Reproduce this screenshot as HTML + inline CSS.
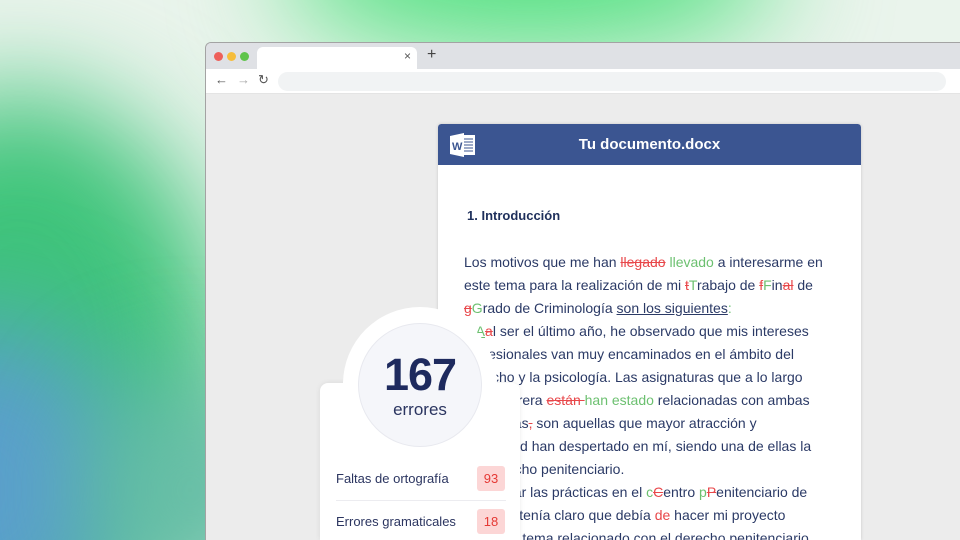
<!DOCTYPE html>
<html><head><meta charset="utf-8"><style>
*{margin:0;padding:0;box-sizing:border-box}
html,body{width:960px;height:540px;overflow:hidden}
body{position:relative;font-family:"Liberation Sans",sans-serif;background:#eaf4ec}
.bg{position:absolute;left:0;top:0;width:960px;height:540px;overflow:hidden}
.b{position:absolute;border-radius:50%;filter:blur(55px)}
.win{position:absolute;left:205px;top:42px;width:755px;height:498px;background:#ececec;border:1px solid #a3a3a3;border-bottom:none;border-right:none;border-radius:6px 0 0 0;overflow:hidden}
.tabs{height:26px;background:#dfe1e5;position:relative}
.dot{position:absolute;top:9px;width:9px;height:9px;border-radius:50%}
.tab{position:absolute;left:51px;top:4px;width:160px;height:22px;background:#fff;border-radius:6px 6px 0 0}
.tool{height:25px;background:#fff;position:relative;border-bottom:1px solid #e4e4e4}
.addr{position:absolute;left:72px;top:3px;width:668px;height:19px;background:#f1f3f4;border-radius:10px}
.doc{position:absolute;left:438px;top:124px;width:423px;height:416px;background:#fff;border-radius:3px 3px 0 0;box-shadow:0 0 3px rgba(0,0,0,.15);overflow:hidden}
.hd{height:41px;background:#3b5591;border-radius:3px 3px 0 0;color:#fff;font-weight:bold;font-size:15px;text-align:center;line-height:41px;position:relative}
.h1{position:absolute;left:29px;top:84px;font-weight:bold;font-size:13px;color:#1e2f5b}
.txt{position:absolute;left:26px;top:127px;width:395px;font-size:14px;line-height:23px;color:#2b3a66;white-space:nowrap}
.r{color:#e8474a;text-decoration:line-through}
.g{color:#6cc070}
.card{position:absolute;left:320px;top:383px;width:200px;height:157px;background:#fff;border-radius:8px 8px 0 0;box-shadow:0 0 6px rgba(0,0,0,.08)}
.bump{position:absolute;left:343px;top:307px;width:154px;height:154px;border-radius:50%;background:#fff}
.inner{position:absolute;left:358px;top:323px;width:124px;height:124px;border-radius:50%;background:#f5f6fa;border:1px solid #e8e9ef;text-align:center;color:#1e2a5e}
.row{position:absolute;left:336px;font-size:13px;color:#2b3560}
.badge{position:absolute;left:477px;width:28px;height:25px;background:#fcd6d6;color:#e53935;border-radius:3px;font-size:13px;text-align:center;line-height:25px}
</style></head><body>
<div class="bg">
<div class="b" style="left:280px;top:-110px;width:500px;height:160px;background:#4fe07e"></div>
<div class="b" style="left:-190px;top:90px;width:420px;height:560px;background:#3ec47a"></div>
<div class="b" style="left:-180px;top:320px;width:320px;height:340px;background:#5a9fcc"></div>
<div class="b" style="left:90px;top:380px;width:200px;height:220px;background:#66bda6"></div>
</div>
<div class="win">
<div class="tabs">
<div class="dot" style="left:8px;background:#ee5f5a"></div>
<div class="dot" style="left:21px;background:#f6bd3c"></div>
<div class="dot" style="left:34px;background:#5fc44b"></div>
<div class="tab"><span style="position:absolute;right:6px;top:2px;font-size:12px;color:#555">×</span></div>
<span style="position:absolute;left:221px;top:3px;font-size:16px;color:#444">+</span>
</div>
<div class="tool">
<span style="position:absolute;left:9px;top:3px;font-size:13px;color:#555">←</span>
<span style="position:absolute;left:31px;top:3px;font-size:13px;color:#aaa">→</span>
<span style="position:absolute;left:52px;top:3px;font-size:13px;color:#555">↻</span>
<div class="addr"></div>
</div>
</div>
<div class="doc">
<div class="hd">Tu documento.docx
<svg style="position:absolute;left:11px;top:8px" width="28" height="26" viewBox="0 0 28 26"><rect x="9" y="3" width="17" height="20" fill="#fff"/><g stroke="#3b5591" stroke-width="1"><line x1="15" y1="7" x2="24" y2="7"/><line x1="15" y1="10" x2="24" y2="10"/><line x1="15" y1="13" x2="24" y2="13"/><line x1="15" y1="16" x2="24" y2="16"/><line x1="15" y1="19" x2="24" y2="19"/></g><path d="M1 4 L15 1 L15 25 L1 22Z" fill="#fff"/><text x="3" y="18" font-size="11" font-weight="bold" fill="#3b5591" font-family="Liberation Sans">W</text></svg>
</div>
<div class="h1">1. Introducción</div>
<div class="txt">
Los motivos que me han <span class="r">llegado</span> <span class="g">llevado</span> a interesarme en<br>
este tema para la realización de mi <span class="r">t</span><span class="g">T</span>rabajo de <span class="r">f</span><span class="g">F</span>in<span class="r">al</span> de<br>
<span class="r">g</span><span class="g">G</span>rado de Criminología <u>son los siguientes</u><span class="g">:</span><br>
&nbsp;&nbsp;&nbsp;<u class="g">A</u><span class="r">a</span>l ser el último año, he observado que mis intereses<br>
profesionales van muy encaminados en el ámbito del<br>
derecho y la psicología. Las asignaturas que a lo largo<br>
de la carrera <span class="r">están </span><span class="g">han estado</span> relacionadas con ambas<br>
disciplinas<span class="r">,</span> son aquellas que mayor atracción y<br>
curiosidad han despertado en mí, siendo una de ellas la<br>
del derecho penitenciario.<br>
Al realizar las prácticas en el <span class="g">c</span><span class="r">C</span>entro <span class="g">p</span><span class="r">P</span>enitenciario de<br>
Brians I, tenía claro que debía <span class="r" style="text-decoration:none">de</span> hacer mi proyecto<br>
sobre un tema relacionado con el derecho penitenciario
</div>
</div>
<div class="card"></div>
<div class="bump"></div>
<div class="inner">
<div style="font-size:45px;font-weight:bold;margin-top:26px;line-height:50px;letter-spacing:-1px">167</div>
<div style="font-size:17px;color:#2b3560;line-height:20px">errores</div>
</div>
<div class="row" style="top:471px">Faltas de ortografía</div>
<div class="badge" style="top:466px">93</div>
<div style="position:absolute;left:336px;top:500px;width:170px;height:1px;background:#ececf0"></div>
<div class="row" style="top:514px">Errores gramaticales</div>
<div class="badge" style="top:509px">18</div>
</body></html>
